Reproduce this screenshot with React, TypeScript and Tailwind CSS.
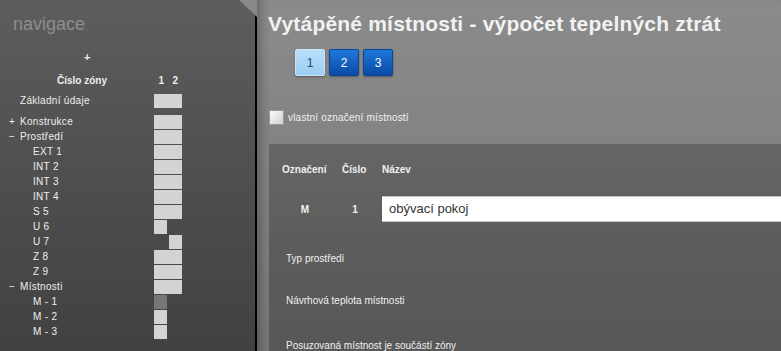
import React from "react";

type NavRow = {
  label: string;
  level: 0 | 1;
  sign?: "+" | "−";
  cells: ("full" | "c1" | "c2" | "c1dark")[];
};

const rows: NavRow[] = [
  { label: "Konstrukce", level: 0, sign: "+", cells: ["full"] },
  { label: "Prostředí", level: 0, sign: "−", cells: ["full"] },
  { label: "EXT 1", level: 1, cells: ["full"] },
  { label: "INT 2", level: 1, cells: ["full"] },
  { label: "INT 3", level: 1, cells: ["full"] },
  { label: "INT 4", level: 1, cells: ["full"] },
  { label: "S 5", level: 1, cells: ["full"] },
  { label: "U 6", level: 1, cells: ["c1"] },
  { label: "U 7", level: 1, cells: ["c2"] },
  { label: "Z 8", level: 1, cells: ["full"] },
  { label: "Z 9", level: 1, cells: ["full"] },
  { label: "Místnosti", level: 0, sign: "−", cells: ["full"] },
  { label: "M - 1", level: 1, cells: ["c1dark"] },
  { label: "M - 2", level: 1, cells: ["c1"] },
  { label: "M - 3", level: 1, cells: ["c1"] },
];

const ZoneCells = ({ cells }: { cells: NavRow["cells"] }) => {
  const c = cells[0];
  if (c === "full") return <div className="h-[14px] w-[28px] bg-[#d3d3d3]" />;
  return (
    <div className="flex gap-[2px] w-[28px]">
      <div
        className={`h-[14px] w-[13px] ${
          c === "c1" ? "bg-[#d3d3d3]" : c === "c1dark" ? "bg-[#777777]" : ""
        }`}
      />
      <div className={`h-[14px] w-[13px] ${c === "c2" ? "bg-[#d3d3d3]" : ""}`} />
    </div>
  );
};

const Sidebar = () => (
  <div className="w-[257px] shrink-0 h-full border-r-2 border-black bg-gradient-to-b from-[#5d5d5d] to-[#414141] [clip-path:polygon(0_0,239px_0,257px_17px,257px_100%,0_100%)] text-[#eeeeee] text-[10px] tracking-[0.3px]">
    <div className="pl-[13px] pt-[12px] text-[18px] leading-[24px] tracking-normal text-[#8d8d8d]">
      navigace
    </div>
    <div className="pl-[84px] mt-[14px] font-bold text-[11px] leading-[14px]">+</div>
    <div className="flex items-center mt-[9px] h-[15px]">
      <div className="w-[154px] pl-[57px] font-bold tracking-normal">Číslo zóny</div>
      <div className="flex w-[28px] font-bold">
        <span className="w-[15px] text-center">1</span>
        <span className="w-[13px] text-center">2</span>
      </div>
    </div>
    <div className="flex items-center mt-[5px] h-[15px]">
      <div className="w-[154px] pl-[20px]">Základní údaje</div>
      <ZoneCells cells={["full"]} />
    </div>
    <div className="flex flex-col mt-[6px]">
      {rows.map((r) => (
        <div key={r.label} className="flex items-center h-[15px]">
          <div className={`w-[154px] flex ${r.level === 0 ? "pl-[9px]" : "pl-[33px]"}`}>
            {r.sign && <span className="w-[11px]">{r.sign}</span>}
            <span>{r.label}</span>
          </div>
          <ZoneCells cells={r.cells} />
        </div>
      ))}
    </div>
  </div>
);

const PageButton = ({ n, active }: { n: number; active?: boolean }) => (
  <div
    className={`w-[30px] h-[27px] rounded-[2px] flex items-center justify-center text-[12px] shadow-[0_1px_2px_rgba(0,0,0,0.35)] ${
      active
        ? "bg-gradient-to-b from-[#b9defa] to-[#9ccdf3] text-[#2b4a66] border border-[#c9e6fb]"
        : "bg-gradient-to-b from-[#1f78db] to-[#0a4aa6] text-white border border-[#0b4594]"
    }`}
  >
    {n}
  </div>
);

export default function App() {
  return (
    <div className="w-[781px] h-[351px] overflow-hidden flex bg-[#888888] font-['Liberation_Sans',Arial,sans-serif]">
      <Sidebar />
      <div className="flex-1 min-w-0 flex flex-col bg-gradient-to-b from-[#8b8b8b] to-[#777777] shadow-[inset_10px_0_8px_-6px_rgba(0,0,0,0.25)]">
        <h1 className="ml-[11px] mt-[12px] text-[21px] leading-[24px] font-bold tracking-[0.2px] text-[#f2f2f2] whitespace-nowrap">
          Vytápěné místnosti - výpočet tepelných ztrát
        </h1>
        <div className="flex gap-[4px] ml-[38px] mt-[13px]">
          <PageButton n={1} active />
          <PageButton n={2} />
          <PageButton n={3} />
        </div>
        <div className="flex items-center ml-[12px] mt-[34px] gap-[4px]">
          <div className="w-[15px] h-[15px] border border-[#9a9a9a] bg-gradient-to-br from-[#fdfdfd] to-[#cfcfcf]" />
          <span className="text-[10px] text-[#f0f0f0] tracking-[0.2px]">vlastní označení místností</span>
        </div>
        <div className="ml-[12px] mt-[19px] flex-1 bg-gradient-to-b from-[#666666] via-[#5c5c5c] to-[#575757] text-[#f0f0f0] text-[10px] pl-[13px] pt-[18px]">
          <div className="grid grid-cols-[46px_26px_1fr] gap-x-[14px] items-center">
            <div className="font-bold">Označení</div>
            <div className="font-bold">Číslo</div>
            <div className="font-bold">Název</div>
            <div className="h-[19px]" />
            <div />
            <div />
            <div className="font-bold text-center">M</div>
            <div className="font-bold text-center">1</div>
            <div className="h-[26px] bg-white border-y border-[#c8c8c8] flex items-center pl-[7px] text-[13px] text-[#333333] whitespace-nowrap">
              obývací pokoj
            </div>
          </div>
          <div className="pl-[4px] mt-[31px] flex flex-col gap-[30px]">
            <div className="leading-[12px]">Typ prostředí</div>
            <div className="leading-[12px]">Návrhová teplota místnosti</div>
            <div className="leading-[12px] mt-[3px]">Posuzovaná místnost je součástí zóny</div>
          </div>
        </div>
      </div>
    </div>
  );
}
